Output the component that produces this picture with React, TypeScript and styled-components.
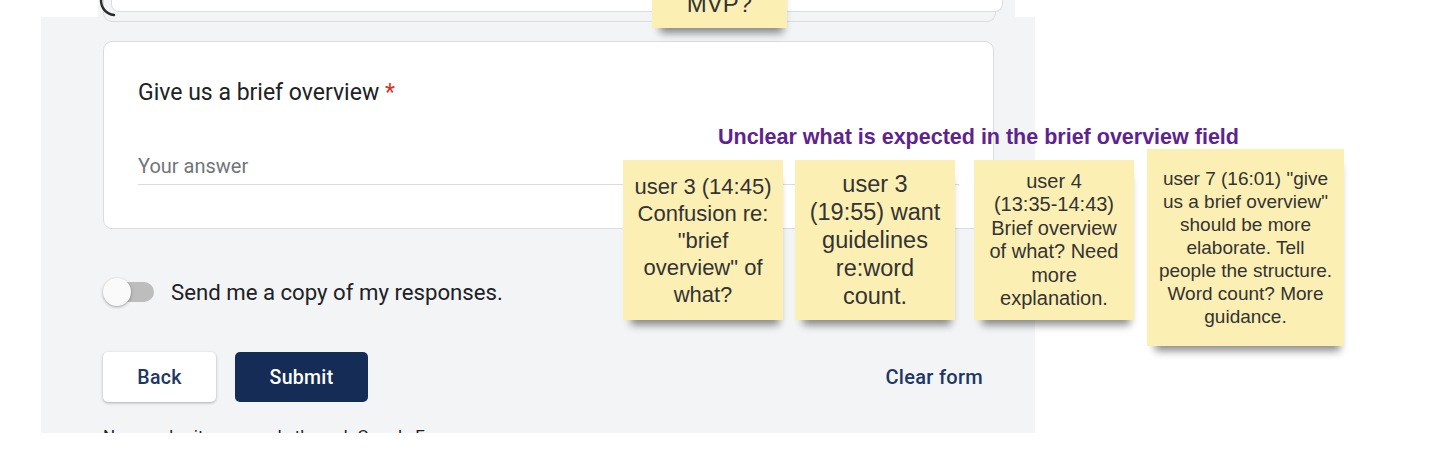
import React from 'react';
import styled, { createGlobalStyle } from 'styled-components';

const Global = createGlobalStyle`
  html, body {
    margin: 0;
    padding: 0;
    background: #ffffff;
  }
`;

type Note = {
  id: string;
  x: number;
  y: number;
  w: number;
  h: number;
  size: number;
  lh: number;
  lines: string[];
};

const notes: Note[] = [
  {
    id: 'n1',
    x: 623,
    y: 160,
    w: 160,
    h: 160,
    size: 22,
    lh: 27,
    lines: ['user 3 (14:45)', 'Confusion re:', '"brief', 'overview" of', 'what?'],
  },
  {
    id: 'n2',
    x: 795,
    y: 160,
    w: 160,
    h: 160,
    size: 23.5,
    lh: 28,
    lines: ['user 3', '(19:55) want', 'guidelines', 're:word', 'count.'],
  },
  {
    id: 'n3',
    x: 974,
    y: 160,
    w: 160,
    h: 160,
    size: 20,
    lh: 23.5,
    lines: ['user 4', '(13:35-14:43)', 'Brief overview', 'of what? Need', 'more', 'explanation.'],
  },
  {
    id: 'n4',
    x: 1147,
    y: 149,
    w: 197,
    h: 197,
    size: 19,
    lh: 23,
    lines: [
      'user 7 (16:01) "give',
      'us a brief overview"',
      'should be more',
      'elaborate. Tell',
      'people the structure.',
      'Word count? More',
      'guidance.',
    ],
  },
];

export default function App(): JSX.Element {
  return (
    <>
      <Global />
      <Board_div>
        {/* form screenshot pasted on the board */}
        <Shot_div>
          <TopStrip_div>
            <RadioArc_svg width='20' height='18' viewBox='0 0 20 18'>
              <path d='M3 0 C3 8 8 14 16 15' fill='none' stroke='#2a2a2a' strokeWidth='2.4' strokeLinecap='round' />
            </RadioArc_svg>
            <PrevCard_div>
              <PrevInner_div />
            </PrevCard_div>
          </TopStrip_div>
          <Panel_div>
            <Question_div>
              <QTitle_p>
                Give us a brief overview <Req_span>*</Req_span>
              </QTitle_p>
              <Answer_div>Your answer</Answer_div>
            </Question_div>
            <CopyRow_div>
              <Switch_span>
                <Thumb_span />
              </Switch_span>
              <CopyText_span>Send me a copy of my responses.</CopyText_span>
            </CopyRow_div>
            <Actions_div>
              <BackButton>Back</BackButton>
              <SubmitButton>Submit</SubmitButton>
              <ClearButton>Clear form</ClearButton>
            </Actions_div>
            <Footer_p>Never submit passwords through Google Forms.</Footer_p>
          </Panel_div>
        </Shot_div>

        {/* board items */}
        <Sticky_div $x={652} $y={-40} $w={135} $h={68} $size={24} $lh={27.6} $end>
          MVP?
        </Sticky_div>
        <Heading_p>Unclear what is expected in the brief overview field</Heading_p>
        {notes.map((note) => {
          return (
            <Sticky_div
              key={note.id}
              $x={note.x}
              $y={note.y}
              $w={note.w}
              $h={note.h}
              $size={note.size}
              $lh={note.lh}
            >
              {note.lines.map((line, i) => (
                <Line_span key={i}>{line}</Line_span>
              ))}
            </Sticky_div>
          );
        })}
      </Board_div>
    </>
  );
}

// --------------- Styled ---------------
const Board_div = styled.div`
  position: relative;
  width: 1442px;
  height: 472px;
  overflow: hidden;
  background: #ffffff;
`;

const Shot_div = styled.div`
  margin-left: 41px;
  width: 994px;
`;

const TopStrip_div = styled.div`
  position: relative;
  z-index: 1;
  margin-left: 57px;
  width: 917px;
  height: 17px;
  background: #f3f4f6;
`;

const RadioArc_svg = styled.svg`
  position: absolute;
  left: 0;
  top: 0;
  z-index: 2;
`;

const PrevCard_div = styled.div`
  margin-left: 5px;
  width: 891px;
  height: 21px;
  border: 1px solid #dadce0;
  border-top: none;
  border-radius: 0 0 9px 9px;
  background: #f3f4f6;
`;

const PrevInner_div = styled.div`
  margin-left: 7px;
  width: 890px;
  height: 11px;
  border: 1px solid #dadce0;
  border-top: none;
  border-radius: 0 0 8px 8px;
  background: #ffffff;
`;

const Panel_div = styled.div`
  box-sizing: border-box;
  height: 416px;
  padding: 24px 41px 0 62px;
  background: #f3f4f6;
  overflow: hidden;
  font-family: Roboto, 'Liberation Sans', sans-serif;
`;

const Question_div = styled.div`
  box-sizing: border-box;
  height: 188px;
  padding: 37px 34px 0 34px;
  background: #ffffff;
  border: 1px solid #dadce0;
  border-radius: 9px;
`;

const QTitle_p = styled.p`
  margin: 0 0 45px 0;
  font-size: 23px;
  line-height: 28px;
  color: #202124;
`;

const Req_span = styled.span`
  color: #d93025;
`;

const Answer_div = styled.div`
  padding-top: 2px;
  padding-bottom: 6px;
  border-bottom: 1px solid #dadce0;
  font-size: 20px;
  line-height: 24px;
  color: #70757a;
`;

const CopyRow_div = styled.div`
  display: flex;
  align-items: center;
  gap: 17px;
  margin-top: 49px;
  height: 28px;
`;

const Switch_span = styled.span`
  position: relative;
  display: flex;
  align-items: center;
  width: 51px;
  height: 28px;
  &::before {
    content: '';
    margin-left: 7px;
    width: 44px;
    height: 20px;
    border-radius: 10px;
    background: #bdbdbd;
  }
`;

const Thumb_span = styled.span`
  position: absolute;
  left: 0;
  top: 0;
  width: 28px;
  height: 28px;
  border-radius: 50%;
  background: #fafafa;
  box-shadow: 0 1px 3px rgba(0, 0, 0, 0.35);
`;

const CopyText_span = styled.span`
  font-size: 22.2px;
  color: #202124;
`;

const Actions_div = styled.div`
  display: flex;
  align-items: center;
  gap: 19px;
  margin-top: 46px;
`;

const BaseButton = styled.button`
  box-sizing: border-box;
  height: 50px;
  border: none;
  border-radius: 5px;
  font-family: Roboto, 'Liberation Sans', sans-serif;
  font-size: 19.5px;
  font-weight: 500;
  letter-spacing: 0.3px;
  cursor: pointer;
`;

const BackButton = styled(BaseButton)`
  width: 113px;
  background: #ffffff;
  color: #1c3766;
  box-shadow: 0 1px 3px rgba(0, 0, 0, 0.3);
`;

const SubmitButton = styled(BaseButton)`
  width: 133px;
  background: #152c56;
  color: #ffffff;
`;

const ClearButton = styled(BaseButton)`
  margin-left: auto;
  padding: 0 11px;
  background: transparent;
  color: #1c3766;
  font-size: 20px;
`;

const Footer_p = styled.p`
  margin: 23px 0 0 0;
  font-size: 17px;
  line-height: 22px;
  color: #202124;
`;

const Heading_p = styled.p`
  position: absolute;
  left: 718px;
  top: 127px;
  margin: 0;
  font-family: 'Liberation Sans', Arial, sans-serif;
  font-weight: 700;
  font-size: 21.5px;
  line-height: 1;
  color: #5d2390;
  white-space: nowrap;
`;

const Sticky_div = styled.div<{
  $x: number;
  $y: number;
  $w: number;
  $h: number;
  $size: number;
  $lh: number;
  $end?: boolean;
}>`
  position: absolute;
  left: ${(p) => p.$x}px;
  top: ${(p) => p.$y}px;
  width: ${(p) => p.$w}px;
  height: ${(p) => p.$h}px;
  box-sizing: border-box;
  padding: ${(p) => (p.$end ? '0 6px 10px' : '0 6px')};
  display: flex;
  flex-direction: column;
  align-items: center;
  justify-content: ${(p) => (p.$end ? 'flex-end' : 'center')};
  background: #fcefb3;
  box-shadow: 2px 11px 8px -6px rgba(0, 0, 0, 0.45);
  font-family: 'Liberation Sans', Arial, sans-serif;
  font-size: ${(p) => p.$size}px;
  line-height: ${(p) => p.$lh}px;
  color: #333333;
  text-align: center;
  z-index: 3;
`;

const Line_span = styled.span`
  display: block;
  white-space: nowrap;
`;
